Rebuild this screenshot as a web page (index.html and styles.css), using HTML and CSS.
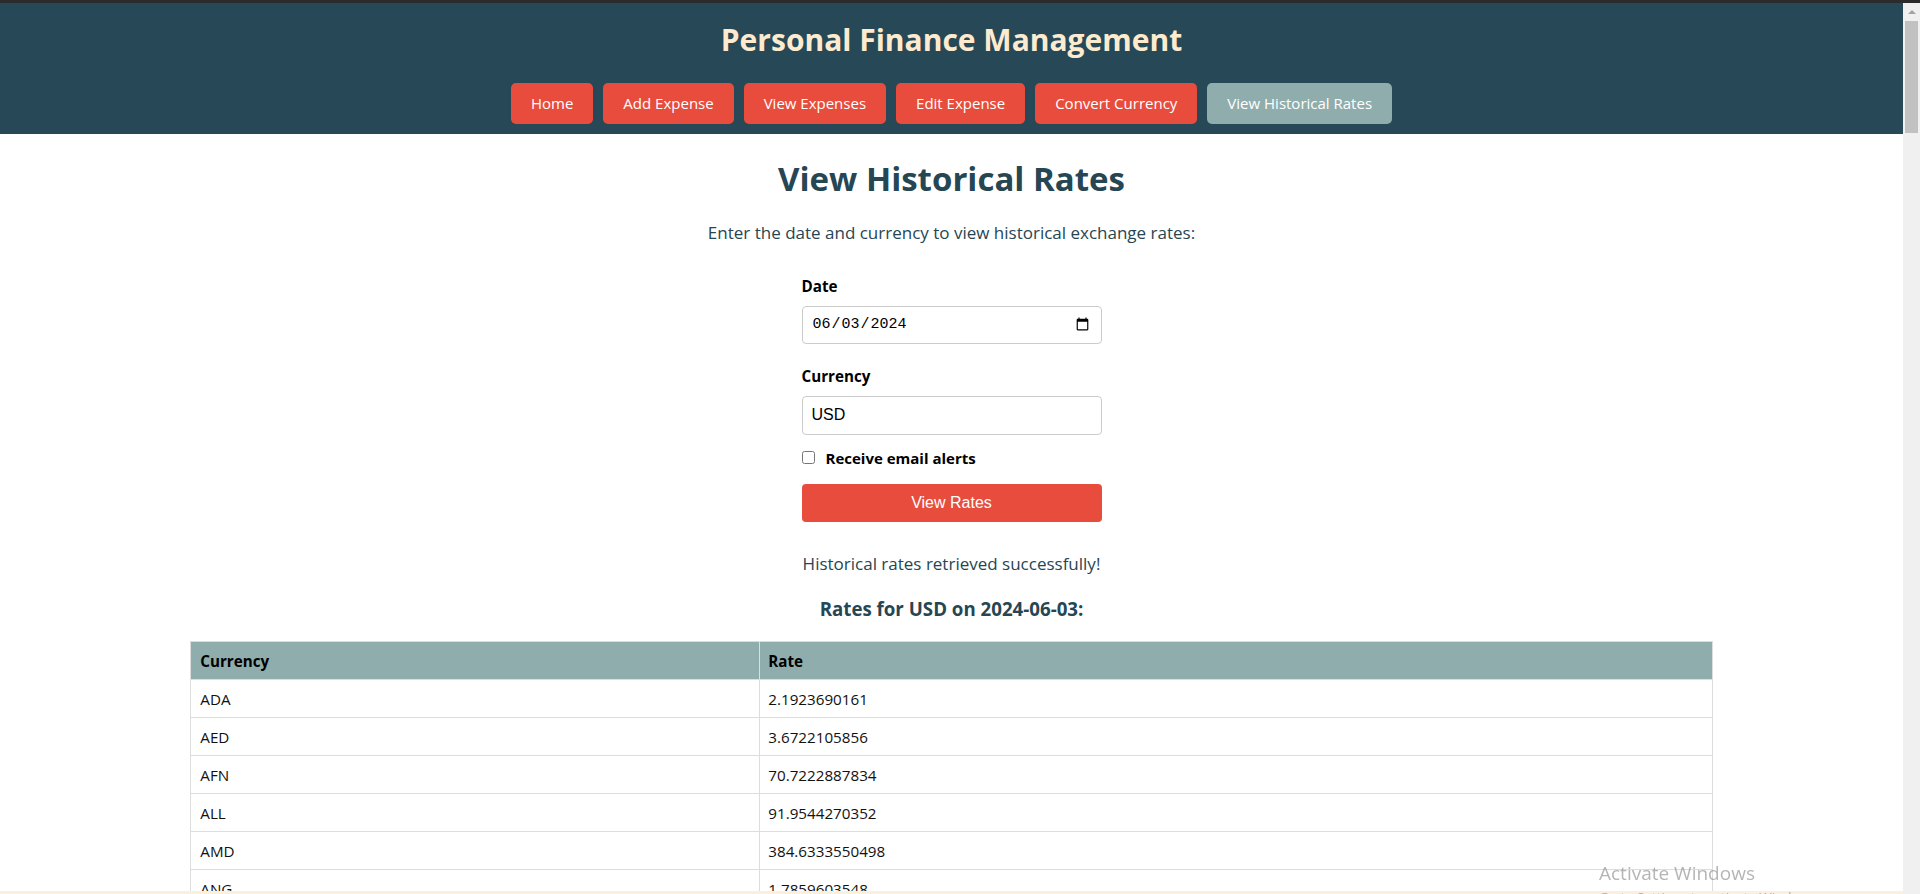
FILE: index.html
```html
<!DOCTYPE html>
<html lang="en">
<head>
<meta charset="utf-8">
<title>View Historical Rates</title>
<link rel="stylesheet" href="styles.css">
</head>
<body>
<div class="topstrip"></div>
<div class="window">
  <div class="page">
    <header class="site-header">
      <h1 class="site-title">Personal Finance Management</h1>
      <nav class="nav">
        <a class="nav-btn" href="#">Home</a>
        <a class="nav-btn" href="#">Add Expense</a>
        <a class="nav-btn" href="#">View Expenses</a>
        <a class="nav-btn" href="#">Edit Expense</a>
        <a class="nav-btn" href="#">Convert Currency</a>
        <a class="nav-btn active" href="#">View Historical Rates</a>
      </nav>
    </header>
    <main class="content">
      <h2 class="page-title">View Historical Rates</h2>
      <p class="intro">Enter the date and currency to view historical exchange rates:</p>
      <form class="rates-form">
        <label class="field-label" for="date">Date</label>
        <input class="field date-field" type="date" id="date" value="2024-06-03">
        <label class="field-label spaced" for="currency">Currency</label>
        <input class="field text-field" type="text" id="currency" value="USD">
        <div class="check-row">
          <input class="check" type="checkbox" id="alerts">
          <label class="check-label" for="alerts">Receive email alerts</label>
        </div>
        <button class="submit-btn" type="button">View Rates</button>
      </form>
      <p class="status">Historical rates retrieved successfully!</p>
      <h3 class="rates-title">Rates for USD on 2024-06-03:</h3>
      <table class="rates-table">
        <thead>
          <tr><th class="col-cur">Currency</th><th class="col-rate">Rate</th></tr>
        </thead>
        <tbody>
          <tr><td>ADA</td><td class="col-rate">2.1923690161</td></tr>
          <tr><td>AED</td><td class="col-rate">3.6722105856</td></tr>
          <tr><td>AFN</td><td class="col-rate">70.7222887834</td></tr>
          <tr><td>ALL</td><td class="col-rate">91.9544270352</td></tr>
          <tr><td>AMD</td><td class="col-rate">384.6333550498</td></tr>
          <tr><td>ANG</td><td class="col-rate">1.7859603548</td></tr>
        </tbody>
      </table>
    </main>
  </div>
  <div class="scrollbar">
    <div class="sb-up"><span class="sb-arrow"></span></div>
    <div class="sb-thumb"></div>
  </div>
</div>
<div class="taskbar-edge"></div>
<div class="watermark">
  <div class="wm-title">Activate Windows</div>
  <div class="wm-sub">Go to Settings to activate Windows.</div>
</div>
</body>
</html>
```
FILE: styles.css
```css
* { box-sizing: border-box; }

html {
  height: 100%;
  overflow: hidden;
}

body {
  margin: 0;
  font-family: "Open Sans", "Noto Sans", sans-serif;
  color: #000;
  background: #fff;
}

.topstrip {
  height: 3px;
  background: #2b2b2b;
}

.window {
  display: flex;
  align-items: stretch;
}

.page {
  flex: 1;
  min-width: 0;
}

/* fake classic scrollbar */
.scrollbar {
  flex: none;
  width: 17px;
  background: #f0f0f0;
  display: flex;
  flex-direction: column;
  align-items: center;
}

.sb-up {
  height: 18px;
  width: 17px;
  display: flex;
  justify-content: center;
  padding-top: 7px;
}

.sb-arrow {
  width: 0;
  height: 0;
  border-left: 4px solid transparent;
  border-right: 4px solid transparent;
  border-bottom: 4px solid #a3a3a3;
}

.sb-thumb {
  width: 13px;
  height: 112px;
  background: #c1c1c1;
}

/* header */
.site-header {
  background: #264857;
  padding: 16px 0 10px;
  text-align: center;
}

.site-title {
  margin: 0;
  font-size: 30px;
  line-height: 42px;
  font-weight: 700;
  color: #fdebd0;
}

.nav {
  display: flex;
  justify-content: center;
  gap: 10px;
  margin-top: 22px;
}

.nav-btn {
  display: block;
  padding: 10px 20px;
  font-size: 15px;
  line-height: 20.7px;
  color: #fff;
  background: #e74c3c;
  border-radius: 5px;
  text-decoration: none;
}

.nav-btn.active {
  background: #8fadad;
}

/* content */
.content {
  text-align: center;
  padding-top: 23px;
}

.page-title {
  margin: 0;
  font-size: 33px;
  line-height: 44px;
  font-weight: 700;
  color: #264653;
}

.intro {
  margin: 20.5px 0 0;
  font-size: 17px;
  line-height: 24px;
  color: #264653;
}

.rates-form {
  width: 300px;
  margin: 30.6px auto 0;
  display: flex;
  flex-direction: column;
  text-align: left;
}

.field-label {
  font-size: 15.2px;
  line-height: 20px;
  font-weight: 700;
  color: #000;
}

.field-label.spaced {
  margin-top: 21.8px;
}

.field {
  margin-top: 10.2px;
  width: 300px;
  border: 1px solid #ccc;
  border-radius: 4px;
  background: #fff;
  color: #000;
  outline: none;
}

.date-field {
  height: 38px;
  padding: 0 9px 0 9px;
  font-family: "Liberation Mono", monospace;
  font-size: 15px;
}

.text-field {
  height: 39px;
  padding: 0 9px;
  font-family: "Liberation Sans", Arial, sans-serif;
  font-size: 16px;
}

.check-row {
  margin-top: 12.8px;
  display: flex;
  align-items: center;
  gap: 11px;
  height: 20px;
}

.check {
  margin: 0;
  width: 13px;
  height: 13px;
}

.check-label {
  font-size: 15px;
  line-height: 20px;
  font-weight: 700;
}

.submit-btn {
  margin-top: 16.2px;
  height: 38px;
  width: 300px;
  border: none;
  border-radius: 4px;
  background: #e74c3c;
  color: #fff;
  font-family: "Liberation Sans", Arial, sans-serif;
  font-size: 16px;
}

.status {
  margin: 30.4px 0 0;
  font-size: 17px;
  line-height: 24px;
  color: #264653;
}

.rates-title {
  margin: 20.4px 0 0;
  font-size: 18.7px;
  line-height: 24px;
  font-weight: 700;
  color: #264653;
}

.rates-table {
  width: 80%;
  margin: 20.2px auto 0;
  border-collapse: collapse;
  text-align: left;
}

.rates-table th,
.rates-table td {
  border: 1px solid #ddd;
  padding: 9px 9px 8px;
  font-size: 15.2px;
  line-height: 20px;
  color: #111;
}

.rates-table .col-rate {
  padding-left: 8px;
}

.rates-table th {
  background: #8fadad;
  font-weight: 700;
  color: #000;
}

.col-cur {
  width: 37.4%;
}

/* overlays */
.taskbar-edge {
  position: fixed;
  left: 0;
  right: 17px;
  bottom: 0;
  height: 3px;
  background: #fcefdc;
}

.watermark {
  position: fixed;
  left: 1599px;
  top: 861px;
  color: rgba(120, 120, 120, 0.55);
  pointer-events: none;
}

.wm-title {
  font-size: 19px;
  line-height: 25px;
}

.wm-sub {
  font-size: 13.5px;
  line-height: 18px;
  margin-top: 2px;
}
```
